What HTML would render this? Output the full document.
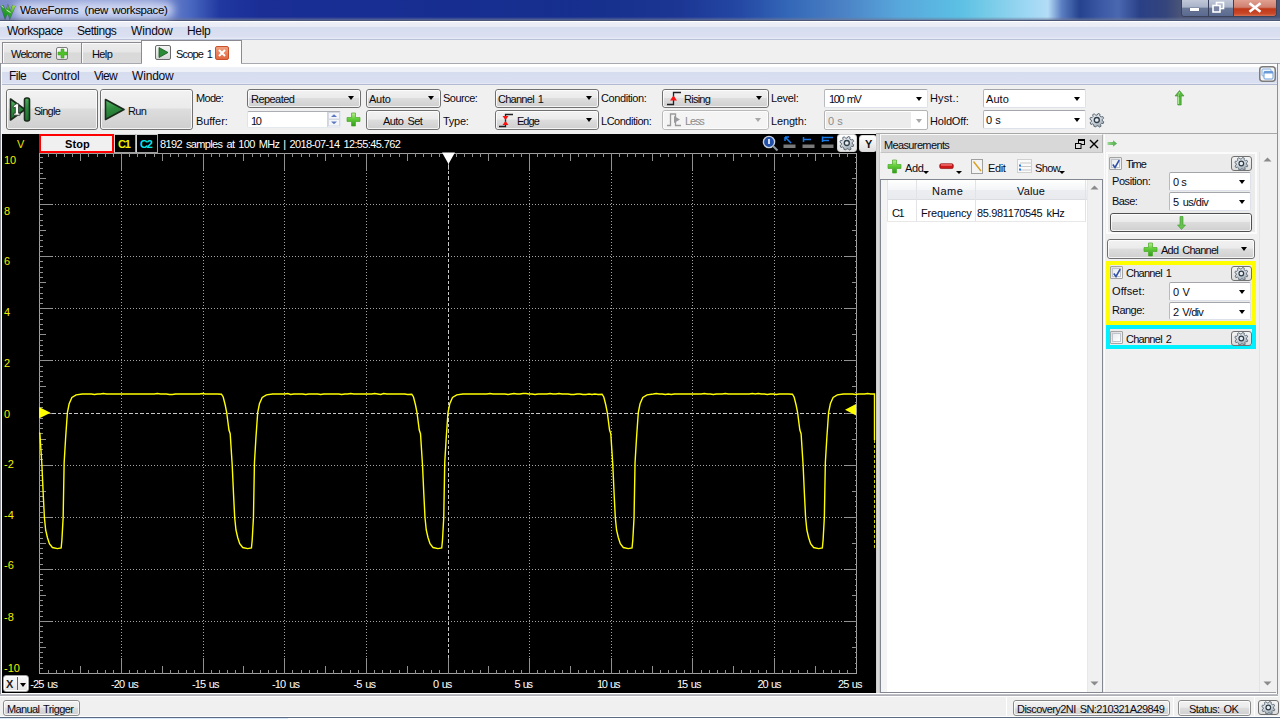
<!DOCTYPE html><html><head><meta charset="utf-8"><style>
*{margin:0;padding:0;box-sizing:border-box}
html,body{width:1280px;height:719px;overflow:hidden;background:#f0f0f0}
body{position:relative;font-family:"Liberation Sans",sans-serif;font-size:11px;color:#0a0a14}
.t{position:absolute;height:14px;line-height:14px;white-space:pre}
.btn{position:absolute;border:1px solid #707070;border-radius:3px;background:linear-gradient(#f2f2f2 0%,#ebebeb 45%,#dddddd 50%,#cfcfcf 100%)}
.btn:after{content:"";position:absolute;left:0;top:0;right:0;bottom:0;border:1px solid rgba(255,255,255,.75);border-radius:2px}
.edit{position:absolute;background:#fff;border:1px solid #abadb3;border-top-color:#abadb3;border-radius:2px}
.dis{position:absolute;background:#f4f4f4;border:1px solid #adb2b5;border-radius:2px}
.arr{position:absolute;width:0;height:0;border-left:3.5px solid transparent;border-right:3.5px solid transparent;border-top:4px solid #000}
svg{position:absolute;overflow:visible}
</style></head><body>
<div style="position:absolute;left:0px;top:0px;width:1280px;height:21px;background:linear-gradient(90deg,#7c8cc8 0px,#8c9cd4 90px,#8494d0 150px,#4a68c0 190px,#2038a0 220px,#1a2e96 260px,#172e90 450px,#16308e 600px,#1c3694 680px,#2448a4 740px,#3468b8 790px,#4a80c4 840px,#58a8dc 900px,#5cc0e4 960px,#78cce8 990px,#a0d8f4 1030px,#b4dcf6 1048px,#5a7cc0 1062px,#24428e 1080px,#3a58a4 1100px,#4a68b0 1118px,#2a4086 1140px,#34447c 1165px,#4a5478 1180px,#4a5478 1280px)"></div>
<div style="position:absolute;left:0px;top:17px;width:1280px;height:3px;background:linear-gradient(rgba(120,130,160,0) ,rgba(110,120,150,.75))"></div>
<div style="position:absolute;left:0px;top:20px;width:1280px;height:1px;background:#4c5678"></div>
<div style="position:absolute;left:14px;top:2px;width:160px;height:16px;background:rgba(235,240,255,.72);filter:blur(4px);border-radius:8px"></div>
<svg style="left:0px;top:4px" width="16" height="13" viewBox="0 0 16 13"><defs><linearGradient id="wg" x1="0" y1="1" x2="1" y2="0"><stop offset="0" stop-color="#0e8a2a"/><stop offset="0.55" stop-color="#3aae2a"/><stop offset="1" stop-color="#a8e040"/></linearGradient></defs><path d="M2,1.5 L5.2,11.3 L7.8,4.8 L9.9,11.3 L14,1.5" fill="none" stroke="#2a4a3a" stroke-width="3.6" stroke-linejoin="miter" opacity=".55"/><path d="M2,1.5 L5.2,11.3 L7.8,4.8 L9.9,11.3 L14,1.5" fill="none" stroke="url(#wg)" stroke-width="2.6" stroke-linejoin="miter"/><path d="M1.5,2 L3.5,3.5 M6.5,6 L10.5,8.5" stroke="#f0fff0" stroke-width="0.9" opacity=".9"/></svg>
<div class="t" style="left:20.00px;top:3px;font-size:11.5px;color:#000;letter-spacing:-0.344px;">WaveForms</div>
<div class="t" style="left:84.50px;top:3px;font-size:11.5px;color:#000;letter-spacing:-0.364px;word-spacing:1.5px;">(new workspace)</div>
<div style="position:absolute;left:1181px;top:0px;width:96px;height:17px;border:1px solid #3c4258;border-top:none;border-radius:0 0 4px 4px;overflow:hidden;background:#6a7696"><div style="position:absolute;left:0px;top:0px;width:26px;height:16px;background:linear-gradient(#c0c8d8,#a8b2c8 45%,#6a7898 50%,#5a6a90)"></div><div style="position:absolute;left:26px;top:0px;width:1px;height:16px;background:#39405a"></div><div style="position:absolute;left:27px;top:0px;width:24px;height:16px;background:linear-gradient(#c0c8d8,#a8b2c8 45%,#6a7898 50%,#5a6a90)"></div><div style="position:absolute;left:51px;top:0px;width:1px;height:16px;background:#39405a"></div><div style="position:absolute;left:52px;top:0px;width:44px;height:16px;background:linear-gradient(#e0a090,#d08070 45%,#c03818 55%,#c84828 85%,#d87050)"></div></div>
<div style="position:absolute;left:1190px;top:8px;width:9px;height:3px;background:#fff;box-shadow:0 0 1px #334"></div>
<svg style="left:1212px;top:2px" width="13" height="11"><rect x="4.5" y="0.5" width="7" height="6" fill="none" stroke="#fff" stroke-width="1.6"/><rect x="1" y="3.5" width="7" height="6.5" fill="#7a86a4" stroke="#fff" stroke-width="1.6"/></svg>
<svg style="left:1249px;top:3px" width="12" height="9"><path d="M1.5,1 L10.5,8 M10.5,1 L1.5,8" stroke="#fff" stroke-width="2.6" stroke-linecap="square"/></svg>
<div style="position:absolute;left:0px;top:21px;width:1280px;height:18px;background:linear-gradient(#ffffff 0px,#ffffff 1px,#eef0f8 1px,#e8ebf5 6px,#d6ddef 6px,#dae0f1 16px,#e6eaf6 17px)"></div>
<div style="position:absolute;left:0px;top:39px;width:1280px;height:1px;background:#b9c1d9"></div>
<div class="t" style="left:7.00px;top:24px;font-size:12px;letter-spacing:-0.500px;">Workspace</div>
<div class="t" style="left:77.00px;top:24px;font-size:12px;letter-spacing:-0.507px;">Settings</div>
<div class="t" style="left:131.00px;top:24px;font-size:12px;letter-spacing:-0.180px;">Window</div>
<div class="t" style="left:187.00px;top:24px;font-size:12px;letter-spacing:-0.300px;">Help</div>
<div style="position:absolute;left:2px;top:42px;width:80px;height:22px;background:linear-gradient(#f8f8f8 0px,#ececec 1px,#e6e6e6 9px,#d9d9d9 10px,#dadada 20px);border:1px solid #8a8a90;border-bottom:none;box-shadow:inset 1px 1px 0 #fafafa"></div>
<div style="position:absolute;left:81px;top:42px;width:61px;height:22px;background:linear-gradient(#f8f8f8 0px,#ececec 1px,#e6e6e6 9px,#d9d9d9 10px,#dadada 20px);border:1px solid #8a8a90;border-bottom:none;box-shadow:inset 1px 1px 0 #fafafa"></div>
<div style="position:absolute;left:141px;top:40px;width:101px;height:25px;background:#fff;border:1px solid #8a8a90;border-bottom:none"></div>
<div style="position:absolute;left:241px;top:63px;width:1039px;height:1px;background:#a8a8b0"></div>
<div style="position:absolute;left:0px;top:63px;width:142px;height:1px;background:#a8a8b0"></div>
<div class="t" style="left:11.00px;top:47px;font-size:11px;letter-spacing:-0.808px;">Welcome</div>
<div class="t" style="left:92.00px;top:47px;font-size:11px;letter-spacing:-0.600px;">Help</div>
<div class="t" style="left:176.00px;top:47px;font-size:11px;letter-spacing:-0.842px;word-spacing:1.5px;">Scope 1</div>
<div style="position:absolute;left:56px;top:47px;width:12px;height:13px;border:1px solid #7c7c7c;border-radius:2px;background:linear-gradient(#fdfdfd,#e0e0e0)"></div>
<svg style="left:57px;top:48px" width="11" height="11"><path d="M4,1 H7 V4 H10 V7 H7 V10 H4 V7 H1 V4 H4 Z" fill="#4ec02a" stroke="#3a9a20" stroke-width="0.5"/></svg>
<div style="position:absolute;left:155px;top:45px;width:16px;height:15px;border:1px solid #6a6a6a;border-radius:2px;background:linear-gradient(#f6f6f6,#d8d8d8)"></div>
<svg style="left:158px;top:47px" width="11" height="11"><path d="M1,0.5 L10,5.5 L1,10.5 Z" fill="#2a8a36" stroke="#165a20" stroke-width="0.8"/></svg>
<div style="position:absolute;left:215px;top:46px;width:14px;height:14px;border:1px solid #c8502a;border-radius:2px;background:linear-gradient(#f0a080,#e06840)"></div>
<svg style="left:218px;top:49px" width="8" height="8"><path d="M1,1 L7,7 M7,1 L1,7" stroke="#fff" stroke-width="2"/></svg>
<div style="position:absolute;left:0px;top:63px;width:1px;height:656px;background:#8e9098"></div>
<div style="position:absolute;left:1px;top:64px;width:1px;height:655px;background:#fcfcfc"></div>
<div style="position:absolute;left:1277px;top:63px;width:1px;height:656px;background:#8e9098"></div>
<div style="position:absolute;left:2px;top:64px;width:1275px;height:20px;background:linear-gradient(#ffffff 0px,#ffffff 3px,#eff1f8 3px,#eef0f8 8px,#d6ddef 8px,#dae0f1 19px,#e4e8f5 19px)"></div>
<div style="position:absolute;left:2px;top:84px;width:1275px;height:1px;background:#b3bbd2"></div>
<div class="t" style="left:9.00px;top:69px;font-size:12px;letter-spacing:-0.517px;">File</div>
<div class="t" style="left:42.00px;top:69px;font-size:12px;letter-spacing:-0.150px;">Control</div>
<div class="t" style="left:94.00px;top:69px;font-size:12px;letter-spacing:-0.683px;">View</div>
<div class="t" style="left:132.00px;top:69px;font-size:12px;letter-spacing:-0.180px;">Window</div>
<svg style="left:1259px;top:66px" width="17" height="16"><rect x="0.75" y="0.75" width="15.5" height="14.5" rx="3" fill="#f6f6f6" stroke="#7c7c7c" stroke-width="1.5"/><rect x="3" y="3" width="9" height="7" rx="1" fill="#eef4fc" stroke="#8ab0e0" stroke-width="1"/><rect x="5" y="5.5" width="9" height="7.5" rx="1" fill="#ffffff" stroke="#6a9ad8" stroke-width="1"/><rect x="5" y="5.5" width="9" height="2" fill="#6a9ad8"/></svg>
<div class="btn" style="left:6px;top:89px;width:92px;height:41px"></div>
<div class="btn" style="left:100px;top:89px;width:93px;height:41px"></div>
<svg style="left:9px;top:97px" width="22" height="25" viewBox="0 0 22 25"><defs><linearGradient id="gg" x1="0" y1="0" x2="0.3" y2="1"><stop offset="0" stop-color="#5cb86a"/><stop offset="0.5" stop-color="#2e8c3e"/><stop offset="1" stop-color="#1f7030"/></linearGradient></defs><path d="M1.5,2 L16,12.5 L1.5,23 Z" fill="url(#gg)" stroke="#1a2a1c" stroke-width="1.6" stroke-linejoin="round"/><rect x="15.5" y="1" width="5" height="23" rx="2" fill="url(#gg)" stroke="#1a2a1c" stroke-width="1.6"/><path d="M4.2,9 L7.2,6.8 H9.6 V16.2 H11 V18.2 H4.6 V16.2 H6.3 V10.2 L4.2,11.2 Z" fill="#ffffff" stroke="#303830" stroke-width="0.9" stroke-linejoin="round"/></svg>
<svg style="left:104px;top:98px" width="22" height="24" viewBox="0 0 22 24"><path d="M1.5,1.5 L20,11.5 L1.5,21.5 Z" fill="url(#gg)" stroke="#1a2a1c" stroke-width="1.6" stroke-linejoin="round"/></svg>
<div class="t" style="left:34.00px;top:104px;font-size:11px;letter-spacing:-0.760px;">Single</div>
<div class="t" style="left:128.00px;top:104px;font-size:11px;letter-spacing:-0.700px;">Run</div>
<div class="t" style="left:196.00px;top:91px;font-size:11px;letter-spacing:-0.688px;">Mode:</div>
<div class="t" style="left:196.00px;top:114px;font-size:11px;letter-spacing:-0.067px;">Buffer:</div>
<div class="btn" style="left:247px;top:89px;width:114px;height:19px"></div><div class="arr" style="left:348px;top:96px"></div><div class="t" style="left:251.00px;top:92px;font-size:11px;letter-spacing:-0.557px;">Repeated</div>
<div class="edit" style="left:247px;top:111px;width:94px;height:17px;border-color:#abadb3 #e3e9ef #e3e9ef #e2e3ea"></div>
<div class="t" style="left:251.00px;top:114px;font-size:11px;letter-spacing:-1.450px;">10</div>
<div style="position:absolute;left:327px;top:112px;width:13px;height:15px;border-left:1px solid #d0d4dc"></div>
<svg style="left:328px;top:112px" width="13" height="15"><rect x="0.5" y="0.5" width="11" height="6.5" fill="#f4f6fa" stroke="#d4d8e0"/><rect x="0.5" y="7.5" width="11" height="6.5" fill="#f4f6fa" stroke="#d4d8e0"/><path d="M3,5 L6,2.2 L9,5 Z" fill="#5a78c0"/><path d="M3,9.5 L6,12.3 L9,9.5 Z" fill="#5a78c0"/></svg>
<svg style="left:346px;top:112px" width="15" height="15"><defs><linearGradient id="pg" x1="0" y1="0" x2="0" y2="1"><stop offset="0" stop-color="#b8f090"/><stop offset="0.45" stop-color="#62cc38"/><stop offset="1" stop-color="#2e9a1a"/></linearGradient></defs><path d="M5.5,1 H9.5 V5.5 H14 V9.5 H9.5 V14 H5.5 V9.5 H1 V5.5 H5.5 Z" fill="url(#pg)" stroke="#4aa82a" stroke-width="0.7" stroke-linejoin="round"/></svg>
<div class="btn" style="left:366px;top:89px;width:75px;height:19px"></div><div class="arr" style="left:428px;top:96px"></div><div class="t" style="left:369.00px;top:92px;font-size:11px;letter-spacing:-0.283px;">Auto</div>
<div class="btn" style="left:366px;top:110px;width:74px;height:20px"></div>
<div class="t" style="left:383.00px;top:114px;font-size:11px;letter-spacing:-0.557px;word-spacing:1.5px;">Auto Set</div>
<div class="t" style="left:443.00px;top:91px;font-size:11px;letter-spacing:-0.517px;">Source:</div>
<div class="t" style="left:443.00px;top:114px;font-size:11px;letter-spacing:-0.275px;">Type:</div>
<div class="btn" style="left:495px;top:89px;width:104px;height:19px"></div><div class="arr" style="left:586px;top:96px"></div><div class="t" style="left:498.00px;top:92px;font-size:11px;letter-spacing:-0.731px;word-spacing:1.5px;">Channel 1</div>
<div class="btn" style="left:495px;top:110px;width:104px;height:20px"></div><div class="arr" style="left:586px;top:118px"></div><svg style="left:499px;top:113px" width="16" height="15"><path d="M0,13.5 H6.5 V1.5 H14" fill="none" stroke="#202020" stroke-width="1.3"/><path d="M3.5,3 L9.5,3 L6.5,7 Z M3.5,12 L9.5,12 L6.5,8 Z" fill="#ff1010"/></svg><div class="t" style="left:517.00px;top:114px;font-size:11px;letter-spacing:-0.967px;">Edge</div>
<div class="t" style="left:601.00px;top:91px;font-size:11px;letter-spacing:-0.417px;">Condition:</div>
<div class="t" style="left:601.00px;top:114px;font-size:11px;letter-spacing:-0.485px;">LCondition:</div>
<div class="btn" style="left:662px;top:89px;width:107px;height:19px"></div><div class="arr" style="left:756px;top:96px"></div><svg style="left:667px;top:91px" width="16" height="15"><path d="M0,13.5 H6.5 V1.5 H14" fill="none" stroke="#202020" stroke-width="1.3"/><path d="M3,9.5 L10,9.5 L6.5,4.5 Z" fill="#ff1010"/></svg><div class="t" style="left:684.00px;top:92px;font-size:11px;letter-spacing:-0.750px;">Rising</div>
<div class="btn" style="left:662px;top:110px;width:107px;height:20px;border-color:#b8b8b8;background:#f4f4f4"></div>
<div class="arr" style="left:755px;top:118px;border-top-color:#a8a8a8"></div>
<svg style="left:667px;top:112px" width="16" height="15"><path d="M0,13.5 H3.5 V2 H8.5 V13.5 H14" fill="none" stroke="#9a9a9a" stroke-width="1.3"/><path d="M7,4 L13,7.5 L7,11 Z" fill="#9a9a9a"/></svg>
<div class="t" style="left:685.00px;top:114px;font-size:11px;color:#8c8c8c;letter-spacing:-1.150px;">Less</div>
<div class="t" style="left:771.00px;top:91px;font-size:11px;letter-spacing:-0.310px;">Level:</div>
<div class="t" style="left:771.00px;top:114px;font-size:11px;letter-spacing:-0.150px;">Length:</div>
<div class="edit" style="left:824px;top:89px;width:104px;height:19px;border-color:#a4a6ac #dde2ea #dde2ea #b8bac0"></div><div class="arr" style="left:916px;top:97px"></div><div class="t" style="left:829.00px;top:92px;font-size:11px;letter-spacing:-1.320px;word-spacing:1.5px;">100 mV</div>
<div class="edit" style="left:824px;top:110px;width:104px;height:20px;border-color:#b4b4b4"></div><div style="position:absolute;left:826px;top:112px;width:85px;height:16px;background:#ececec"></div><div class="arr" style="left:916px;top:119px;border-top-color:#a8a8a8"></div><div class="t" style="left:828.00px;top:114px;font-size:11px;color:#8c8c8c;letter-spacing:0.075px;">0 s</div>
<div class="t" style="left:930.00px;top:91px;font-size:11px;letter-spacing:0.140px;">Hyst.:</div>
<div class="t" style="left:930.00px;top:114px;font-size:11px;letter-spacing:-0.193px;">HoldOff:</div>
<div class="edit" style="left:983px;top:89px;width:103px;height:19px;border-color:#a4a6ac #dde2ea #dde2ea #b8bac0"></div><div class="arr" style="left:1074px;top:97px"></div><div class="t" style="left:986.00px;top:92px;font-size:11px;letter-spacing:0.050px;">Auto</div>
<div class="edit" style="left:983px;top:110px;width:103px;height:19px;border-color:#a4a6ac #dde2ea #dde2ea #b8bac0"></div><div class="arr" style="left:1074px;top:118px"></div><div class="t" style="left:986.00px;top:113px;font-size:11px;letter-spacing:0.075px;">0 s</div>
<svg style="left:1090px;top:113px" width="14" height="14" viewBox="0 0 14 14"><defs><linearGradient id="gr" x1="0" y1="0" x2="1" y2="1"><stop offset="0" stop-color="#f4f6f8"/><stop offset="0.5" stop-color="#d0d6dc"/><stop offset="1" stop-color="#8a96a2"/></linearGradient></defs><g transform="rotate(18 7 7)"><path d="M6,0.5 H8 L8.4,2.3 L9.9,2.9 L11.4,1.9 L12.8,3.3 L11.8,4.8 L12.4,6.3 L14,6.6 V8.4 L12.4,8.8 L11.8,10.2 L12.8,11.7 L11.4,13.1 L9.9,12.1 L8.4,12.7 L8,14 H6 L5.6,12.7 L4.1,12.1 L2.6,13.1 L1.2,11.7 L2.2,10.2 L1.6,8.8 L0,8.4 V6.6 L1.6,6.3 L2.2,4.8 L1.2,3.3 L2.6,1.9 L4.1,2.9 L5.6,2.3 Z" fill="url(#gr)" stroke="#5e6c78" stroke-width="0.9"/></g><circle cx="6.8" cy="7" r="2.5" fill="#e8ecf0" stroke="#2e3c48" stroke-width="1.3"/></svg>
<svg style="left:1174px;top:90px" width="11" height="16"><path d="M5.5,0.5 L10,6 H7.2 V15 H3.8 V6 H1 Z" fill="#58b840" stroke="#3a8a28" stroke-width="0.6"/><path d="M5.5,2 L4.5,6.5 V14" stroke="#a8e890" stroke-width="1"/></svg>
<div style="position:absolute;left:2px;top:134px;width:874px;height:559px;background:#000"></div>
<svg class="plot" width="876" height="559" viewBox="0 134 876 559" style="position:absolute;left:0;top:134px"><g shape-rendering="crispEdges"><line x1="121.5" y1="170" x2="121.5" y2="658" stroke="#a4a4a4" stroke-width="1" stroke-dasharray="1 2"/>
<line x1="203.5" y1="170" x2="203.5" y2="658" stroke="#a4a4a4" stroke-width="1" stroke-dasharray="1 2"/>
<line x1="284.5" y1="170" x2="284.5" y2="658" stroke="#a4a4a4" stroke-width="1" stroke-dasharray="1 2"/>
<line x1="366.5" y1="170" x2="366.5" y2="658" stroke="#a4a4a4" stroke-width="1" stroke-dasharray="1 2"/>
<line x1="529.5" y1="170" x2="529.5" y2="658" stroke="#a4a4a4" stroke-width="1" stroke-dasharray="1 2"/>
<line x1="611.5" y1="170" x2="611.5" y2="658" stroke="#a4a4a4" stroke-width="1" stroke-dasharray="1 2"/>
<line x1="692.5" y1="170" x2="692.5" y2="658" stroke="#a4a4a4" stroke-width="1" stroke-dasharray="1 2"/>
<line x1="774.5" y1="170" x2="774.5" y2="658" stroke="#a4a4a4" stroke-width="1" stroke-dasharray="1 2"/>
<line x1="52" y1="204.5" x2="845" y2="204.5" stroke="#a4a4a4" stroke-width="1" stroke-dasharray="1 2"/>
<line x1="52" y1="256.5" x2="845" y2="256.5" stroke="#a4a4a4" stroke-width="1" stroke-dasharray="1 2"/>
<line x1="52" y1="308.5" x2="845" y2="308.5" stroke="#a4a4a4" stroke-width="1" stroke-dasharray="1 2"/>
<line x1="52" y1="360.5" x2="845" y2="360.5" stroke="#a4a4a4" stroke-width="1" stroke-dasharray="1 2"/>
<line x1="52" y1="465.5" x2="845" y2="465.5" stroke="#a4a4a4" stroke-width="1" stroke-dasharray="1 2"/>
<line x1="52" y1="517.5" x2="845" y2="517.5" stroke="#a4a4a4" stroke-width="1" stroke-dasharray="1 2"/>
<line x1="52" y1="569.5" x2="845" y2="569.5" stroke="#a4a4a4" stroke-width="1" stroke-dasharray="1 2"/>
<line x1="52" y1="621.5" x2="845" y2="621.5" stroke="#a4a4a4" stroke-width="1" stroke-dasharray="1 2"/>
<rect x="39.5" y="153.5" width="817" height="520" fill="none" stroke="#a0a0a0" stroke-width="1"/>
<line x1="48.5" y1="153" x2="48.5" y2="157" stroke="#909090"/>
<line x1="48.5" y1="674" x2="48.5" y2="670" stroke="#909090"/>
<line x1="56.5" y1="153" x2="56.5" y2="157" stroke="#909090"/>
<line x1="56.5" y1="674" x2="56.5" y2="670" stroke="#909090"/>
<line x1="64.5" y1="153" x2="64.5" y2="157" stroke="#909090"/>
<line x1="64.5" y1="674" x2="64.5" y2="670" stroke="#909090"/>
<line x1="72.5" y1="153" x2="72.5" y2="157" stroke="#909090"/>
<line x1="72.5" y1="674" x2="72.5" y2="670" stroke="#909090"/>
<line x1="80.5" y1="153" x2="80.5" y2="161" stroke="#909090"/>
<line x1="80.5" y1="674" x2="80.5" y2="666" stroke="#909090"/>
<line x1="88.5" y1="153" x2="88.5" y2="157" stroke="#909090"/>
<line x1="88.5" y1="674" x2="88.5" y2="670" stroke="#909090"/>
<line x1="97.5" y1="153" x2="97.5" y2="157" stroke="#909090"/>
<line x1="97.5" y1="674" x2="97.5" y2="670" stroke="#909090"/>
<line x1="105.5" y1="153" x2="105.5" y2="157" stroke="#909090"/>
<line x1="105.5" y1="674" x2="105.5" y2="670" stroke="#909090"/>
<line x1="113.5" y1="153" x2="113.5" y2="157" stroke="#909090"/>
<line x1="113.5" y1="674" x2="113.5" y2="670" stroke="#909090"/>
<line x1="121.5" y1="153" x2="121.5" y2="170" stroke="#909090"/>
<line x1="121.5" y1="674" x2="121.5" y2="658" stroke="#909090"/>
<line x1="129.5" y1="153" x2="129.5" y2="157" stroke="#909090"/>
<line x1="129.5" y1="674" x2="129.5" y2="670" stroke="#909090"/>
<line x1="137.5" y1="153" x2="137.5" y2="157" stroke="#909090"/>
<line x1="137.5" y1="674" x2="137.5" y2="670" stroke="#909090"/>
<line x1="145.5" y1="153" x2="145.5" y2="157" stroke="#909090"/>
<line x1="145.5" y1="674" x2="145.5" y2="670" stroke="#909090"/>
<line x1="154.5" y1="153" x2="154.5" y2="157" stroke="#909090"/>
<line x1="154.5" y1="674" x2="154.5" y2="670" stroke="#909090"/>
<line x1="162.5" y1="153" x2="162.5" y2="161" stroke="#909090"/>
<line x1="162.5" y1="674" x2="162.5" y2="666" stroke="#909090"/>
<line x1="170.5" y1="153" x2="170.5" y2="157" stroke="#909090"/>
<line x1="170.5" y1="674" x2="170.5" y2="670" stroke="#909090"/>
<line x1="178.5" y1="153" x2="178.5" y2="157" stroke="#909090"/>
<line x1="178.5" y1="674" x2="178.5" y2="670" stroke="#909090"/>
<line x1="186.5" y1="153" x2="186.5" y2="157" stroke="#909090"/>
<line x1="186.5" y1="674" x2="186.5" y2="670" stroke="#909090"/>
<line x1="194.5" y1="153" x2="194.5" y2="157" stroke="#909090"/>
<line x1="194.5" y1="674" x2="194.5" y2="670" stroke="#909090"/>
<line x1="203.5" y1="153" x2="203.5" y2="170" stroke="#909090"/>
<line x1="203.5" y1="674" x2="203.5" y2="658" stroke="#909090"/>
<line x1="211.5" y1="153" x2="211.5" y2="157" stroke="#909090"/>
<line x1="211.5" y1="674" x2="211.5" y2="670" stroke="#909090"/>
<line x1="219.5" y1="153" x2="219.5" y2="157" stroke="#909090"/>
<line x1="219.5" y1="674" x2="219.5" y2="670" stroke="#909090"/>
<line x1="227.5" y1="153" x2="227.5" y2="157" stroke="#909090"/>
<line x1="227.5" y1="674" x2="227.5" y2="670" stroke="#909090"/>
<line x1="235.5" y1="153" x2="235.5" y2="157" stroke="#909090"/>
<line x1="235.5" y1="674" x2="235.5" y2="670" stroke="#909090"/>
<line x1="243.5" y1="153" x2="243.5" y2="161" stroke="#909090"/>
<line x1="243.5" y1="674" x2="243.5" y2="666" stroke="#909090"/>
<line x1="252.5" y1="153" x2="252.5" y2="157" stroke="#909090"/>
<line x1="252.5" y1="674" x2="252.5" y2="670" stroke="#909090"/>
<line x1="260.5" y1="153" x2="260.5" y2="157" stroke="#909090"/>
<line x1="260.5" y1="674" x2="260.5" y2="670" stroke="#909090"/>
<line x1="268.5" y1="153" x2="268.5" y2="157" stroke="#909090"/>
<line x1="268.5" y1="674" x2="268.5" y2="670" stroke="#909090"/>
<line x1="276.5" y1="153" x2="276.5" y2="157" stroke="#909090"/>
<line x1="276.5" y1="674" x2="276.5" y2="670" stroke="#909090"/>
<line x1="284.5" y1="153" x2="284.5" y2="170" stroke="#909090"/>
<line x1="284.5" y1="674" x2="284.5" y2="658" stroke="#909090"/>
<line x1="292.5" y1="153" x2="292.5" y2="157" stroke="#909090"/>
<line x1="292.5" y1="674" x2="292.5" y2="670" stroke="#909090"/>
<line x1="301.5" y1="153" x2="301.5" y2="157" stroke="#909090"/>
<line x1="301.5" y1="674" x2="301.5" y2="670" stroke="#909090"/>
<line x1="309.5" y1="153" x2="309.5" y2="157" stroke="#909090"/>
<line x1="309.5" y1="674" x2="309.5" y2="670" stroke="#909090"/>
<line x1="317.5" y1="153" x2="317.5" y2="157" stroke="#909090"/>
<line x1="317.5" y1="674" x2="317.5" y2="670" stroke="#909090"/>
<line x1="325.5" y1="153" x2="325.5" y2="161" stroke="#909090"/>
<line x1="325.5" y1="674" x2="325.5" y2="666" stroke="#909090"/>
<line x1="333.5" y1="153" x2="333.5" y2="157" stroke="#909090"/>
<line x1="333.5" y1="674" x2="333.5" y2="670" stroke="#909090"/>
<line x1="341.5" y1="153" x2="341.5" y2="157" stroke="#909090"/>
<line x1="341.5" y1="674" x2="341.5" y2="670" stroke="#909090"/>
<line x1="350.5" y1="153" x2="350.5" y2="157" stroke="#909090"/>
<line x1="350.5" y1="674" x2="350.5" y2="670" stroke="#909090"/>
<line x1="358.5" y1="153" x2="358.5" y2="157" stroke="#909090"/>
<line x1="358.5" y1="674" x2="358.5" y2="670" stroke="#909090"/>
<line x1="366.5" y1="153" x2="366.5" y2="170" stroke="#909090"/>
<line x1="366.5" y1="674" x2="366.5" y2="658" stroke="#909090"/>
<line x1="374.5" y1="153" x2="374.5" y2="157" stroke="#909090"/>
<line x1="374.5" y1="674" x2="374.5" y2="670" stroke="#909090"/>
<line x1="382.5" y1="153" x2="382.5" y2="157" stroke="#909090"/>
<line x1="382.5" y1="674" x2="382.5" y2="670" stroke="#909090"/>
<line x1="390.5" y1="153" x2="390.5" y2="157" stroke="#909090"/>
<line x1="390.5" y1="674" x2="390.5" y2="670" stroke="#909090"/>
<line x1="399.5" y1="153" x2="399.5" y2="157" stroke="#909090"/>
<line x1="399.5" y1="674" x2="399.5" y2="670" stroke="#909090"/>
<line x1="407.5" y1="153" x2="407.5" y2="161" stroke="#909090"/>
<line x1="407.5" y1="674" x2="407.5" y2="666" stroke="#909090"/>
<line x1="415.5" y1="153" x2="415.5" y2="157" stroke="#909090"/>
<line x1="415.5" y1="674" x2="415.5" y2="670" stroke="#909090"/>
<line x1="423.5" y1="153" x2="423.5" y2="157" stroke="#909090"/>
<line x1="423.5" y1="674" x2="423.5" y2="670" stroke="#909090"/>
<line x1="431.5" y1="153" x2="431.5" y2="157" stroke="#909090"/>
<line x1="431.5" y1="674" x2="431.5" y2="670" stroke="#909090"/>
<line x1="439.5" y1="153" x2="439.5" y2="157" stroke="#909090"/>
<line x1="439.5" y1="674" x2="439.5" y2="670" stroke="#909090"/>
<line x1="448.5" y1="153" x2="448.5" y2="170" stroke="#909090"/>
<line x1="448.5" y1="674" x2="448.5" y2="658" stroke="#909090"/>
<line x1="456.5" y1="153" x2="456.5" y2="157" stroke="#909090"/>
<line x1="456.5" y1="674" x2="456.5" y2="670" stroke="#909090"/>
<line x1="464.5" y1="153" x2="464.5" y2="157" stroke="#909090"/>
<line x1="464.5" y1="674" x2="464.5" y2="670" stroke="#909090"/>
<line x1="472.5" y1="153" x2="472.5" y2="157" stroke="#909090"/>
<line x1="472.5" y1="674" x2="472.5" y2="670" stroke="#909090"/>
<line x1="480.5" y1="153" x2="480.5" y2="157" stroke="#909090"/>
<line x1="480.5" y1="674" x2="480.5" y2="670" stroke="#909090"/>
<line x1="488.5" y1="153" x2="488.5" y2="161" stroke="#909090"/>
<line x1="488.5" y1="674" x2="488.5" y2="666" stroke="#909090"/>
<line x1="496.5" y1="153" x2="496.5" y2="157" stroke="#909090"/>
<line x1="496.5" y1="674" x2="496.5" y2="670" stroke="#909090"/>
<line x1="505.5" y1="153" x2="505.5" y2="157" stroke="#909090"/>
<line x1="505.5" y1="674" x2="505.5" y2="670" stroke="#909090"/>
<line x1="513.5" y1="153" x2="513.5" y2="157" stroke="#909090"/>
<line x1="513.5" y1="674" x2="513.5" y2="670" stroke="#909090"/>
<line x1="521.5" y1="153" x2="521.5" y2="157" stroke="#909090"/>
<line x1="521.5" y1="674" x2="521.5" y2="670" stroke="#909090"/>
<line x1="529.5" y1="153" x2="529.5" y2="170" stroke="#909090"/>
<line x1="529.5" y1="674" x2="529.5" y2="658" stroke="#909090"/>
<line x1="537.5" y1="153" x2="537.5" y2="157" stroke="#909090"/>
<line x1="537.5" y1="674" x2="537.5" y2="670" stroke="#909090"/>
<line x1="545.5" y1="153" x2="545.5" y2="157" stroke="#909090"/>
<line x1="545.5" y1="674" x2="545.5" y2="670" stroke="#909090"/>
<line x1="554.5" y1="153" x2="554.5" y2="157" stroke="#909090"/>
<line x1="554.5" y1="674" x2="554.5" y2="670" stroke="#909090"/>
<line x1="562.5" y1="153" x2="562.5" y2="157" stroke="#909090"/>
<line x1="562.5" y1="674" x2="562.5" y2="670" stroke="#909090"/>
<line x1="570.5" y1="153" x2="570.5" y2="161" stroke="#909090"/>
<line x1="570.5" y1="674" x2="570.5" y2="666" stroke="#909090"/>
<line x1="578.5" y1="153" x2="578.5" y2="157" stroke="#909090"/>
<line x1="578.5" y1="674" x2="578.5" y2="670" stroke="#909090"/>
<line x1="586.5" y1="153" x2="586.5" y2="157" stroke="#909090"/>
<line x1="586.5" y1="674" x2="586.5" y2="670" stroke="#909090"/>
<line x1="594.5" y1="153" x2="594.5" y2="157" stroke="#909090"/>
<line x1="594.5" y1="674" x2="594.5" y2="670" stroke="#909090"/>
<line x1="603.5" y1="153" x2="603.5" y2="157" stroke="#909090"/>
<line x1="603.5" y1="674" x2="603.5" y2="670" stroke="#909090"/>
<line x1="611.5" y1="153" x2="611.5" y2="170" stroke="#909090"/>
<line x1="611.5" y1="674" x2="611.5" y2="658" stroke="#909090"/>
<line x1="619.5" y1="153" x2="619.5" y2="157" stroke="#909090"/>
<line x1="619.5" y1="674" x2="619.5" y2="670" stroke="#909090"/>
<line x1="627.5" y1="153" x2="627.5" y2="157" stroke="#909090"/>
<line x1="627.5" y1="674" x2="627.5" y2="670" stroke="#909090"/>
<line x1="635.5" y1="153" x2="635.5" y2="157" stroke="#909090"/>
<line x1="635.5" y1="674" x2="635.5" y2="670" stroke="#909090"/>
<line x1="643.5" y1="153" x2="643.5" y2="157" stroke="#909090"/>
<line x1="643.5" y1="674" x2="643.5" y2="670" stroke="#909090"/>
<line x1="652.5" y1="153" x2="652.5" y2="161" stroke="#909090"/>
<line x1="652.5" y1="674" x2="652.5" y2="666" stroke="#909090"/>
<line x1="660.5" y1="153" x2="660.5" y2="157" stroke="#909090"/>
<line x1="660.5" y1="674" x2="660.5" y2="670" stroke="#909090"/>
<line x1="668.5" y1="153" x2="668.5" y2="157" stroke="#909090"/>
<line x1="668.5" y1="674" x2="668.5" y2="670" stroke="#909090"/>
<line x1="676.5" y1="153" x2="676.5" y2="157" stroke="#909090"/>
<line x1="676.5" y1="674" x2="676.5" y2="670" stroke="#909090"/>
<line x1="684.5" y1="153" x2="684.5" y2="157" stroke="#909090"/>
<line x1="684.5" y1="674" x2="684.5" y2="670" stroke="#909090"/>
<line x1="692.5" y1="153" x2="692.5" y2="170" stroke="#909090"/>
<line x1="692.5" y1="674" x2="692.5" y2="658" stroke="#909090"/>
<line x1="701.5" y1="153" x2="701.5" y2="157" stroke="#909090"/>
<line x1="701.5" y1="674" x2="701.5" y2="670" stroke="#909090"/>
<line x1="709.5" y1="153" x2="709.5" y2="157" stroke="#909090"/>
<line x1="709.5" y1="674" x2="709.5" y2="670" stroke="#909090"/>
<line x1="717.5" y1="153" x2="717.5" y2="157" stroke="#909090"/>
<line x1="717.5" y1="674" x2="717.5" y2="670" stroke="#909090"/>
<line x1="725.5" y1="153" x2="725.5" y2="157" stroke="#909090"/>
<line x1="725.5" y1="674" x2="725.5" y2="670" stroke="#909090"/>
<line x1="733.5" y1="153" x2="733.5" y2="161" stroke="#909090"/>
<line x1="733.5" y1="674" x2="733.5" y2="666" stroke="#909090"/>
<line x1="741.5" y1="153" x2="741.5" y2="157" stroke="#909090"/>
<line x1="741.5" y1="674" x2="741.5" y2="670" stroke="#909090"/>
<line x1="750.5" y1="153" x2="750.5" y2="157" stroke="#909090"/>
<line x1="750.5" y1="674" x2="750.5" y2="670" stroke="#909090"/>
<line x1="758.5" y1="153" x2="758.5" y2="157" stroke="#909090"/>
<line x1="758.5" y1="674" x2="758.5" y2="670" stroke="#909090"/>
<line x1="766.5" y1="153" x2="766.5" y2="157" stroke="#909090"/>
<line x1="766.5" y1="674" x2="766.5" y2="670" stroke="#909090"/>
<line x1="774.5" y1="153" x2="774.5" y2="170" stroke="#909090"/>
<line x1="774.5" y1="674" x2="774.5" y2="658" stroke="#909090"/>
<line x1="782.5" y1="153" x2="782.5" y2="157" stroke="#909090"/>
<line x1="782.5" y1="674" x2="782.5" y2="670" stroke="#909090"/>
<line x1="790.5" y1="153" x2="790.5" y2="157" stroke="#909090"/>
<line x1="790.5" y1="674" x2="790.5" y2="670" stroke="#909090"/>
<line x1="798.5" y1="153" x2="798.5" y2="157" stroke="#909090"/>
<line x1="798.5" y1="674" x2="798.5" y2="670" stroke="#909090"/>
<line x1="807.5" y1="153" x2="807.5" y2="157" stroke="#909090"/>
<line x1="807.5" y1="674" x2="807.5" y2="670" stroke="#909090"/>
<line x1="815.5" y1="153" x2="815.5" y2="161" stroke="#909090"/>
<line x1="815.5" y1="674" x2="815.5" y2="666" stroke="#909090"/>
<line x1="823.5" y1="153" x2="823.5" y2="157" stroke="#909090"/>
<line x1="823.5" y1="674" x2="823.5" y2="670" stroke="#909090"/>
<line x1="831.5" y1="153" x2="831.5" y2="157" stroke="#909090"/>
<line x1="831.5" y1="674" x2="831.5" y2="670" stroke="#909090"/>
<line x1="839.5" y1="153" x2="839.5" y2="157" stroke="#909090"/>
<line x1="839.5" y1="674" x2="839.5" y2="670" stroke="#909090"/>
<line x1="847.5" y1="153" x2="847.5" y2="157" stroke="#909090"/>
<line x1="847.5" y1="674" x2="847.5" y2="670" stroke="#909090"/>
<line x1="39" y1="157.5" x2="43" y2="157.5" stroke="#909090"/>
<line x1="857" y1="157.5" x2="855" y2="157.5" stroke="#909090"/>
<line x1="39" y1="162.5" x2="43" y2="162.5" stroke="#909090"/>
<line x1="857" y1="162.5" x2="855" y2="162.5" stroke="#909090"/>
<line x1="39" y1="168.5" x2="43" y2="168.5" stroke="#909090"/>
<line x1="857" y1="168.5" x2="855" y2="168.5" stroke="#909090"/>
<line x1="39" y1="173.5" x2="43" y2="173.5" stroke="#909090"/>
<line x1="857" y1="173.5" x2="855" y2="173.5" stroke="#909090"/>
<line x1="39" y1="178.5" x2="46" y2="178.5" stroke="#909090"/>
<line x1="857" y1="178.5" x2="852" y2="178.5" stroke="#909090"/>
<line x1="39" y1="183.5" x2="43" y2="183.5" stroke="#909090"/>
<line x1="857" y1="183.5" x2="855" y2="183.5" stroke="#909090"/>
<line x1="39" y1="188.5" x2="43" y2="188.5" stroke="#909090"/>
<line x1="857" y1="188.5" x2="855" y2="188.5" stroke="#909090"/>
<line x1="39" y1="194.5" x2="43" y2="194.5" stroke="#909090"/>
<line x1="857" y1="194.5" x2="855" y2="194.5" stroke="#909090"/>
<line x1="39" y1="199.5" x2="43" y2="199.5" stroke="#909090"/>
<line x1="857" y1="199.5" x2="855" y2="199.5" stroke="#909090"/>
<line x1="39" y1="204.5" x2="52" y2="204.5" stroke="#909090"/>
<line x1="857" y1="204.5" x2="845" y2="204.5" stroke="#909090"/>
<line x1="39" y1="209.5" x2="43" y2="209.5" stroke="#909090"/>
<line x1="857" y1="209.5" x2="855" y2="209.5" stroke="#909090"/>
<line x1="39" y1="214.5" x2="43" y2="214.5" stroke="#909090"/>
<line x1="857" y1="214.5" x2="855" y2="214.5" stroke="#909090"/>
<line x1="39" y1="220.5" x2="43" y2="220.5" stroke="#909090"/>
<line x1="857" y1="220.5" x2="855" y2="220.5" stroke="#909090"/>
<line x1="39" y1="225.5" x2="43" y2="225.5" stroke="#909090"/>
<line x1="857" y1="225.5" x2="855" y2="225.5" stroke="#909090"/>
<line x1="39" y1="230.5" x2="46" y2="230.5" stroke="#909090"/>
<line x1="857" y1="230.5" x2="852" y2="230.5" stroke="#909090"/>
<line x1="39" y1="235.5" x2="43" y2="235.5" stroke="#909090"/>
<line x1="857" y1="235.5" x2="855" y2="235.5" stroke="#909090"/>
<line x1="39" y1="240.5" x2="43" y2="240.5" stroke="#909090"/>
<line x1="857" y1="240.5" x2="855" y2="240.5" stroke="#909090"/>
<line x1="39" y1="246.5" x2="43" y2="246.5" stroke="#909090"/>
<line x1="857" y1="246.5" x2="855" y2="246.5" stroke="#909090"/>
<line x1="39" y1="251.5" x2="43" y2="251.5" stroke="#909090"/>
<line x1="857" y1="251.5" x2="855" y2="251.5" stroke="#909090"/>
<line x1="39" y1="256.5" x2="52" y2="256.5" stroke="#909090"/>
<line x1="857" y1="256.5" x2="845" y2="256.5" stroke="#909090"/>
<line x1="39" y1="261.5" x2="43" y2="261.5" stroke="#909090"/>
<line x1="857" y1="261.5" x2="855" y2="261.5" stroke="#909090"/>
<line x1="39" y1="267.5" x2="43" y2="267.5" stroke="#909090"/>
<line x1="857" y1="267.5" x2="855" y2="267.5" stroke="#909090"/>
<line x1="39" y1="272.5" x2="43" y2="272.5" stroke="#909090"/>
<line x1="857" y1="272.5" x2="855" y2="272.5" stroke="#909090"/>
<line x1="39" y1="277.5" x2="43" y2="277.5" stroke="#909090"/>
<line x1="857" y1="277.5" x2="855" y2="277.5" stroke="#909090"/>
<line x1="39" y1="282.5" x2="46" y2="282.5" stroke="#909090"/>
<line x1="857" y1="282.5" x2="852" y2="282.5" stroke="#909090"/>
<line x1="39" y1="287.5" x2="43" y2="287.5" stroke="#909090"/>
<line x1="857" y1="287.5" x2="855" y2="287.5" stroke="#909090"/>
<line x1="39" y1="293.5" x2="43" y2="293.5" stroke="#909090"/>
<line x1="857" y1="293.5" x2="855" y2="293.5" stroke="#909090"/>
<line x1="39" y1="298.5" x2="43" y2="298.5" stroke="#909090"/>
<line x1="857" y1="298.5" x2="855" y2="298.5" stroke="#909090"/>
<line x1="39" y1="303.5" x2="43" y2="303.5" stroke="#909090"/>
<line x1="857" y1="303.5" x2="855" y2="303.5" stroke="#909090"/>
<line x1="39" y1="308.5" x2="52" y2="308.5" stroke="#909090"/>
<line x1="857" y1="308.5" x2="845" y2="308.5" stroke="#909090"/>
<line x1="39" y1="313.5" x2="43" y2="313.5" stroke="#909090"/>
<line x1="857" y1="313.5" x2="855" y2="313.5" stroke="#909090"/>
<line x1="39" y1="319.5" x2="43" y2="319.5" stroke="#909090"/>
<line x1="857" y1="319.5" x2="855" y2="319.5" stroke="#909090"/>
<line x1="39" y1="324.5" x2="43" y2="324.5" stroke="#909090"/>
<line x1="857" y1="324.5" x2="855" y2="324.5" stroke="#909090"/>
<line x1="39" y1="329.5" x2="43" y2="329.5" stroke="#909090"/>
<line x1="857" y1="329.5" x2="855" y2="329.5" stroke="#909090"/>
<line x1="39" y1="334.5" x2="46" y2="334.5" stroke="#909090"/>
<line x1="857" y1="334.5" x2="852" y2="334.5" stroke="#909090"/>
<line x1="39" y1="340.5" x2="43" y2="340.5" stroke="#909090"/>
<line x1="857" y1="340.5" x2="855" y2="340.5" stroke="#909090"/>
<line x1="39" y1="345.5" x2="43" y2="345.5" stroke="#909090"/>
<line x1="857" y1="345.5" x2="855" y2="345.5" stroke="#909090"/>
<line x1="39" y1="350.5" x2="43" y2="350.5" stroke="#909090"/>
<line x1="857" y1="350.5" x2="855" y2="350.5" stroke="#909090"/>
<line x1="39" y1="355.5" x2="43" y2="355.5" stroke="#909090"/>
<line x1="857" y1="355.5" x2="855" y2="355.5" stroke="#909090"/>
<line x1="39" y1="360.5" x2="52" y2="360.5" stroke="#909090"/>
<line x1="857" y1="360.5" x2="845" y2="360.5" stroke="#909090"/>
<line x1="39" y1="366.5" x2="43" y2="366.5" stroke="#909090"/>
<line x1="857" y1="366.5" x2="855" y2="366.5" stroke="#909090"/>
<line x1="39" y1="371.5" x2="43" y2="371.5" stroke="#909090"/>
<line x1="857" y1="371.5" x2="855" y2="371.5" stroke="#909090"/>
<line x1="39" y1="376.5" x2="43" y2="376.5" stroke="#909090"/>
<line x1="857" y1="376.5" x2="855" y2="376.5" stroke="#909090"/>
<line x1="39" y1="381.5" x2="43" y2="381.5" stroke="#909090"/>
<line x1="857" y1="381.5" x2="855" y2="381.5" stroke="#909090"/>
<line x1="39" y1="386.5" x2="46" y2="386.5" stroke="#909090"/>
<line x1="857" y1="386.5" x2="852" y2="386.5" stroke="#909090"/>
<line x1="39" y1="392.5" x2="43" y2="392.5" stroke="#909090"/>
<line x1="857" y1="392.5" x2="855" y2="392.5" stroke="#909090"/>
<line x1="39" y1="397.5" x2="43" y2="397.5" stroke="#909090"/>
<line x1="857" y1="397.5" x2="855" y2="397.5" stroke="#909090"/>
<line x1="39" y1="402.5" x2="43" y2="402.5" stroke="#909090"/>
<line x1="857" y1="402.5" x2="855" y2="402.5" stroke="#909090"/>
<line x1="39" y1="407.5" x2="43" y2="407.5" stroke="#909090"/>
<line x1="857" y1="407.5" x2="855" y2="407.5" stroke="#909090"/>
<line x1="39" y1="413.5" x2="52" y2="413.5" stroke="#909090"/>
<line x1="857" y1="413.5" x2="845" y2="413.5" stroke="#909090"/>
<line x1="39" y1="418.5" x2="43" y2="418.5" stroke="#909090"/>
<line x1="857" y1="418.5" x2="855" y2="418.5" stroke="#909090"/>
<line x1="39" y1="423.5" x2="43" y2="423.5" stroke="#909090"/>
<line x1="857" y1="423.5" x2="855" y2="423.5" stroke="#909090"/>
<line x1="39" y1="428.5" x2="43" y2="428.5" stroke="#909090"/>
<line x1="857" y1="428.5" x2="855" y2="428.5" stroke="#909090"/>
<line x1="39" y1="433.5" x2="43" y2="433.5" stroke="#909090"/>
<line x1="857" y1="433.5" x2="855" y2="433.5" stroke="#909090"/>
<line x1="39" y1="439.5" x2="46" y2="439.5" stroke="#909090"/>
<line x1="857" y1="439.5" x2="852" y2="439.5" stroke="#909090"/>
<line x1="39" y1="444.5" x2="43" y2="444.5" stroke="#909090"/>
<line x1="857" y1="444.5" x2="855" y2="444.5" stroke="#909090"/>
<line x1="39" y1="449.5" x2="43" y2="449.5" stroke="#909090"/>
<line x1="857" y1="449.5" x2="855" y2="449.5" stroke="#909090"/>
<line x1="39" y1="454.5" x2="43" y2="454.5" stroke="#909090"/>
<line x1="857" y1="454.5" x2="855" y2="454.5" stroke="#909090"/>
<line x1="39" y1="459.5" x2="43" y2="459.5" stroke="#909090"/>
<line x1="857" y1="459.5" x2="855" y2="459.5" stroke="#909090"/>
<line x1="39" y1="465.5" x2="52" y2="465.5" stroke="#909090"/>
<line x1="857" y1="465.5" x2="845" y2="465.5" stroke="#909090"/>
<line x1="39" y1="470.5" x2="43" y2="470.5" stroke="#909090"/>
<line x1="857" y1="470.5" x2="855" y2="470.5" stroke="#909090"/>
<line x1="39" y1="475.5" x2="43" y2="475.5" stroke="#909090"/>
<line x1="857" y1="475.5" x2="855" y2="475.5" stroke="#909090"/>
<line x1="39" y1="480.5" x2="43" y2="480.5" stroke="#909090"/>
<line x1="857" y1="480.5" x2="855" y2="480.5" stroke="#909090"/>
<line x1="39" y1="485.5" x2="43" y2="485.5" stroke="#909090"/>
<line x1="857" y1="485.5" x2="855" y2="485.5" stroke="#909090"/>
<line x1="39" y1="491.5" x2="46" y2="491.5" stroke="#909090"/>
<line x1="857" y1="491.5" x2="852" y2="491.5" stroke="#909090"/>
<line x1="39" y1="496.5" x2="43" y2="496.5" stroke="#909090"/>
<line x1="857" y1="496.5" x2="855" y2="496.5" stroke="#909090"/>
<line x1="39" y1="501.5" x2="43" y2="501.5" stroke="#909090"/>
<line x1="857" y1="501.5" x2="855" y2="501.5" stroke="#909090"/>
<line x1="39" y1="506.5" x2="43" y2="506.5" stroke="#909090"/>
<line x1="857" y1="506.5" x2="855" y2="506.5" stroke="#909090"/>
<line x1="39" y1="512.5" x2="43" y2="512.5" stroke="#909090"/>
<line x1="857" y1="512.5" x2="855" y2="512.5" stroke="#909090"/>
<line x1="39" y1="517.5" x2="52" y2="517.5" stroke="#909090"/>
<line x1="857" y1="517.5" x2="845" y2="517.5" stroke="#909090"/>
<line x1="39" y1="522.5" x2="43" y2="522.5" stroke="#909090"/>
<line x1="857" y1="522.5" x2="855" y2="522.5" stroke="#909090"/>
<line x1="39" y1="527.5" x2="43" y2="527.5" stroke="#909090"/>
<line x1="857" y1="527.5" x2="855" y2="527.5" stroke="#909090"/>
<line x1="39" y1="532.5" x2="43" y2="532.5" stroke="#909090"/>
<line x1="857" y1="532.5" x2="855" y2="532.5" stroke="#909090"/>
<line x1="39" y1="538.5" x2="43" y2="538.5" stroke="#909090"/>
<line x1="857" y1="538.5" x2="855" y2="538.5" stroke="#909090"/>
<line x1="39" y1="543.5" x2="46" y2="543.5" stroke="#909090"/>
<line x1="857" y1="543.5" x2="852" y2="543.5" stroke="#909090"/>
<line x1="39" y1="548.5" x2="43" y2="548.5" stroke="#909090"/>
<line x1="857" y1="548.5" x2="855" y2="548.5" stroke="#909090"/>
<line x1="39" y1="553.5" x2="43" y2="553.5" stroke="#909090"/>
<line x1="857" y1="553.5" x2="855" y2="553.5" stroke="#909090"/>
<line x1="39" y1="558.5" x2="43" y2="558.5" stroke="#909090"/>
<line x1="857" y1="558.5" x2="855" y2="558.5" stroke="#909090"/>
<line x1="39" y1="564.5" x2="43" y2="564.5" stroke="#909090"/>
<line x1="857" y1="564.5" x2="855" y2="564.5" stroke="#909090"/>
<line x1="39" y1="569.5" x2="52" y2="569.5" stroke="#909090"/>
<line x1="857" y1="569.5" x2="845" y2="569.5" stroke="#909090"/>
<line x1="39" y1="574.5" x2="43" y2="574.5" stroke="#909090"/>
<line x1="857" y1="574.5" x2="855" y2="574.5" stroke="#909090"/>
<line x1="39" y1="579.5" x2="43" y2="579.5" stroke="#909090"/>
<line x1="857" y1="579.5" x2="855" y2="579.5" stroke="#909090"/>
<line x1="39" y1="585.5" x2="43" y2="585.5" stroke="#909090"/>
<line x1="857" y1="585.5" x2="855" y2="585.5" stroke="#909090"/>
<line x1="39" y1="590.5" x2="43" y2="590.5" stroke="#909090"/>
<line x1="857" y1="590.5" x2="855" y2="590.5" stroke="#909090"/>
<line x1="39" y1="595.5" x2="46" y2="595.5" stroke="#909090"/>
<line x1="857" y1="595.5" x2="852" y2="595.5" stroke="#909090"/>
<line x1="39" y1="600.5" x2="43" y2="600.5" stroke="#909090"/>
<line x1="857" y1="600.5" x2="855" y2="600.5" stroke="#909090"/>
<line x1="39" y1="605.5" x2="43" y2="605.5" stroke="#909090"/>
<line x1="857" y1="605.5" x2="855" y2="605.5" stroke="#909090"/>
<line x1="39" y1="611.5" x2="43" y2="611.5" stroke="#909090"/>
<line x1="857" y1="611.5" x2="855" y2="611.5" stroke="#909090"/>
<line x1="39" y1="616.5" x2="43" y2="616.5" stroke="#909090"/>
<line x1="857" y1="616.5" x2="855" y2="616.5" stroke="#909090"/>
<line x1="39" y1="621.5" x2="52" y2="621.5" stroke="#909090"/>
<line x1="857" y1="621.5" x2="845" y2="621.5" stroke="#909090"/>
<line x1="39" y1="626.5" x2="43" y2="626.5" stroke="#909090"/>
<line x1="857" y1="626.5" x2="855" y2="626.5" stroke="#909090"/>
<line x1="39" y1="631.5" x2="43" y2="631.5" stroke="#909090"/>
<line x1="857" y1="631.5" x2="855" y2="631.5" stroke="#909090"/>
<line x1="39" y1="637.5" x2="43" y2="637.5" stroke="#909090"/>
<line x1="857" y1="637.5" x2="855" y2="637.5" stroke="#909090"/>
<line x1="39" y1="642.5" x2="43" y2="642.5" stroke="#909090"/>
<line x1="857" y1="642.5" x2="855" y2="642.5" stroke="#909090"/>
<line x1="39" y1="647.5" x2="46" y2="647.5" stroke="#909090"/>
<line x1="857" y1="647.5" x2="852" y2="647.5" stroke="#909090"/>
<line x1="39" y1="652.5" x2="43" y2="652.5" stroke="#909090"/>
<line x1="857" y1="652.5" x2="855" y2="652.5" stroke="#909090"/>
<line x1="39" y1="657.5" x2="43" y2="657.5" stroke="#909090"/>
<line x1="857" y1="657.5" x2="855" y2="657.5" stroke="#909090"/>
<line x1="39" y1="663.5" x2="43" y2="663.5" stroke="#909090"/>
<line x1="857" y1="663.5" x2="855" y2="663.5" stroke="#909090"/>
<line x1="39" y1="668.5" x2="43" y2="668.5" stroke="#909090"/>
<line x1="857" y1="668.5" x2="855" y2="668.5" stroke="#909090"/>
<line x1="52" y1="413.5" x2="845" y2="413.5" stroke="#c8c8c8" stroke-dasharray="3.5 2"/>
<line x1="448.5" y1="165" x2="448.5" y2="658" stroke="#c8c8c8" stroke-dasharray="3.5 2"/></g><path d="M39.50,432.55 L39.90,433.75 L41.90,465.00 L43.15,492.50 L44.40,517.50 L45.65,530.00 L47.40,537.50 L49.40,543.75 L52.40,547.50 L57.40,548.60 L61.15,548.00 L61.90,540.00 L63.15,517.50 L64.15,462.50 L65.65,437.50 L67.40,412.50 L69.15,403.75 L71.90,397.50 L76.15,394.80 L82.40,394.00 L85.40,394.00 L88.40,394.00 L91.40,394.00 L94.40,394.50 L97.40,394.00 L100.40,394.00 L103.40,393.50 L106.40,394.00 L109.40,394.00 L112.40,394.00 L115.40,394.00 L118.40,394.00 L121.40,394.00 L124.40,394.00 L127.40,394.00 L130.40,394.00 L133.40,394.00 L136.40,394.00 L139.40,394.00 L142.40,394.00 L145.40,394.00 L148.40,394.00 L151.40,394.00 L154.40,394.00 L157.40,393.50 L160.40,394.00 L163.40,394.00 L166.40,394.00 L169.40,394.50 L172.40,394.50 L175.40,394.00 L178.40,394.00 L181.40,394.00 L184.40,394.00 L187.40,394.00 L190.40,394.00 L193.40,394.00 L196.40,394.00 L199.40,394.00 L202.40,393.50 L205.40,394.00 L208.40,394.00 L211.40,394.00 L214.40,394.00 L217.40,394.00 L221.45,394.20 L223.20,397.00 L225.20,405.00 L226.70,412.50 L228.95,430.00 L230.20,433.75 L232.20,465.00 L233.45,492.50 L234.70,517.50 L235.95,530.00 L237.70,537.50 L239.70,543.75 L242.70,547.50 L247.70,548.60 L251.45,548.00 L252.20,540.00 L253.45,517.50 L254.45,462.50 L255.95,437.50 L257.70,412.50 L259.45,403.75 L262.20,397.50 L266.45,394.80 L272.70,394.00 L275.70,394.00 L278.70,394.00 L281.70,394.00 L284.70,394.00 L287.70,393.50 L290.70,394.50 L293.70,394.00 L296.70,394.00 L299.70,394.00 L302.70,394.00 L305.70,394.50 L308.70,394.00 L311.70,394.00 L314.70,394.00 L317.70,394.00 L320.70,394.50 L323.70,394.00 L326.70,394.00 L329.70,394.00 L332.70,394.00 L335.70,394.00 L338.70,394.00 L341.70,394.50 L344.70,394.00 L347.70,394.00 L350.70,393.50 L353.70,394.00 L356.70,394.00 L359.70,394.00 L362.70,394.00 L365.70,394.00 L368.70,394.00 L371.70,394.00 L374.70,393.50 L377.70,394.00 L380.70,394.50 L383.70,393.50 L386.70,394.00 L389.70,394.00 L392.70,394.00 L395.70,394.00 L398.70,394.00 L401.70,394.00 L404.70,394.00 L407.70,394.50 L411.75,394.20 L413.50,397.00 L415.50,405.00 L417.00,412.50 L419.25,430.00 L420.50,433.75 L422.50,465.00 L423.75,492.50 L425.00,517.50 L426.25,530.00 L428.00,537.50 L430.00,543.75 L433.00,547.50 L438.00,548.60 L441.75,548.00 L442.50,540.00 L443.75,517.50 L444.75,462.50 L446.25,437.50 L448.00,412.50 L449.75,403.75 L452.50,397.50 L456.75,394.80 L463.00,394.00 L466.00,394.00 L469.00,394.00 L472.00,394.00 L475.00,394.00 L478.00,394.00 L481.00,394.00 L484.00,394.00 L487.00,394.00 L490.00,393.50 L493.00,394.00 L496.00,394.00 L499.00,394.00 L502.00,394.00 L505.00,394.00 L508.00,394.50 L511.00,394.00 L514.00,393.50 L517.00,394.00 L520.00,394.00 L523.00,393.50 L526.00,393.50 L529.00,394.00 L532.00,394.00 L535.00,394.50 L538.00,394.00 L541.00,394.00 L544.00,394.00 L547.00,394.00 L550.00,393.50 L553.00,394.00 L556.00,394.00 L559.00,393.50 L562.00,394.00 L565.00,394.00 L568.00,394.00 L571.00,394.50 L574.00,394.50 L577.00,394.00 L580.00,394.00 L583.00,394.50 L586.00,394.50 L589.00,394.00 L592.00,394.50 L595.00,394.00 L598.00,394.50 L602.05,394.20 L603.80,397.00 L605.80,405.00 L607.30,412.50 L609.55,430.00 L610.80,433.75 L612.80,465.00 L614.05,492.50 L615.30,517.50 L616.55,530.00 L618.30,537.50 L620.30,543.75 L623.30,547.50 L628.30,548.60 L632.05,548.00 L632.80,540.00 L634.05,517.50 L635.05,462.50 L636.55,437.50 L638.30,412.50 L640.05,403.75 L642.80,397.50 L647.05,394.80 L653.30,394.00 L656.30,393.50 L659.30,394.00 L662.30,394.00 L665.30,394.50 L668.30,394.00 L671.30,394.50 L674.30,394.00 L677.30,394.00 L680.30,394.00 L683.30,394.00 L686.30,394.00 L689.30,394.00 L692.30,394.00 L695.30,394.00 L698.30,394.00 L701.30,394.00 L704.30,393.50 L707.30,394.00 L710.30,394.00 L713.30,394.50 L716.30,394.00 L719.30,394.00 L722.30,394.00 L725.30,393.50 L728.30,394.00 L731.30,394.00 L734.30,394.00 L737.30,394.00 L740.30,394.00 L743.30,394.00 L746.30,394.00 L749.30,394.00 L752.30,393.50 L755.30,394.00 L758.30,393.50 L761.30,394.00 L764.30,394.00 L767.30,394.50 L770.30,394.00 L773.30,394.00 L776.30,394.50 L779.30,394.00 L782.30,394.00 L785.30,394.00 L788.30,394.00 L792.35,394.20 L794.10,397.00 L796.10,405.00 L797.60,412.50 L799.85,430.00 L801.10,433.75 L803.10,465.00 L804.35,492.50 L805.60,517.50 L806.85,530.00 L808.60,537.50 L810.60,543.75 L813.60,547.50 L818.60,548.60 L822.35,548.00 L823.10,540.00 L824.35,517.50 L825.35,462.50 L826.85,437.50 L828.60,412.50 L830.35,403.75 L833.10,397.50 L837.35,394.80 L843.60,394.00 L846.60,394.00 L849.60,394.00 L852.60,394.00 L855.60,394.50 L858.60,394.00 L861.60,394.00 L864.60,394.00 L867.60,393.50 L870.60,394.00 L874.50,394.04 L874.5,440" fill="none" stroke="#ffff00" stroke-width="1.4"/><line x1="874.5" y1="440" x2="874.5" y2="550" stroke="#c8c800" stroke-dasharray="3 2" shape-rendering="crispEdges"/><polygon points="39,407 39,418.5 50.5,412.8" fill="#ffff00"/>
<polygon points="856,404 856,415.5 845,409.8" fill="#ffff00"/>
<polygon points="442,152.5 455,152.5 448.5,164" fill="#ffffff"/></svg>
<style>.yl{position:absolute;left:4px;height:14px;line-height:14px;font-size:11px;color:#f0f000}.xl{position:absolute;top:679px;width:80px;text-align:center;height:14px;line-height:14px;font-size:11px;color:#fff}</style>
<div class="t" style="left:4.00px;top:153px;font-size:11px;color:#f0f000;">10</div>
<div class="t" style="left:4.00px;top:204px;font-size:11px;color:#f0f000;">8</div>
<div class="t" style="left:4.00px;top:254px;font-size:11px;color:#f0f000;">6</div>
<div class="t" style="left:4.00px;top:305px;font-size:11px;color:#f0f000;">4</div>
<div class="t" style="left:4.00px;top:356px;font-size:11px;color:#f0f000;">2</div>
<div class="t" style="left:4.00px;top:407px;font-size:11px;color:#f0f000;">0</div>
<div class="t" style="left:4.00px;top:457px;font-size:11px;color:#f0f000;">-2</div>
<div class="t" style="left:4.00px;top:508px;font-size:11px;color:#f0f000;">-4</div>
<div class="t" style="left:4.00px;top:558px;font-size:11px;color:#f0f000;">-6</div>
<div class="t" style="left:4.00px;top:610px;font-size:11px;color:#f0f000;">-8</div>
<div class="t" style="left:4.00px;top:661px;font-size:11px;color:#f0f000;">-10</div>
<div class="t" style="left:30.30px;top:677px;font-size:11px;color:#ffffff;letter-spacing:-0.890px;word-spacing:1.5px;">-25 us</div>
<div class="t" style="left:111.10px;top:677px;font-size:11px;color:#ffffff;letter-spacing:-0.890px;word-spacing:1.5px;">-20 us</div>
<div class="t" style="left:191.90px;top:677px;font-size:11px;color:#ffffff;letter-spacing:-0.890px;word-spacing:1.5px;">-15 us</div>
<div class="t" style="left:272.00px;top:677px;font-size:11px;color:#ffffff;letter-spacing:-0.830px;word-spacing:1.5px;">-10 us</div>
<div class="t" style="left:353.40px;top:677px;font-size:11px;color:#ffffff;letter-spacing:-0.862px;word-spacing:1.5px;">-5 us</div>
<div class="t" style="left:433.00px;top:677px;font-size:11px;color:#ffffff;letter-spacing:-1.000px;word-spacing:1.5px;">0 us</div>
<div class="t" style="left:514.60px;top:677px;font-size:11px;color:#ffffff;letter-spacing:-1.300px;word-spacing:1.5px;">5 us</div>
<div class="t" style="left:597.00px;top:677px;font-size:11px;color:#ffffff;letter-spacing:-1.250px;word-spacing:1.5px;">10 us</div>
<div class="t" style="left:677.00px;top:677px;font-size:11px;color:#ffffff;letter-spacing:-1.000px;word-spacing:1.5px;">15 us</div>
<div class="t" style="left:757.40px;top:677px;font-size:11px;color:#ffffff;letter-spacing:-1.050px;word-spacing:1.5px;">20 us</div>
<div class="t" style="left:838.00px;top:677px;font-size:11px;color:#ffffff;letter-spacing:-0.975px;word-spacing:1.5px;">25 us</div>
<div class="t" style="left:17.00px;top:137px;font-size:11px;color:#e8e800;">V</div>
<div style="position:absolute;left:39px;top:134px;width:75px;height:19px;border:2px solid #ff0000;background:#f0f0f0"></div>
<div class="t" style="left:65.00px;top:137px;font-size:11px;font-weight:bold;color:#000;letter-spacing:0.117px;">Stop</div>
<div style="position:absolute;left:114px;top:134px;width:22px;height:19px;border:1px solid #d0d0d0;border-right-color:#a0a0a0;border-bottom-color:#a0a0a0;background:#000"></div>
<div class="t" style="left:118.00px;top:137px;font-size:11px;font-weight:bold;color:#f0f000;letter-spacing:-1.250px;">C1</div>
<div style="position:absolute;left:136px;top:134px;width:22px;height:19px;border:1px solid #d0d0d0;border-right-color:#a0a0a0;border-bottom-color:#a0a0a0;background:#000"></div>
<div class="t" style="left:140.00px;top:137px;font-size:11px;font-weight:bold;color:#00e8f0;letter-spacing:-1.250px;">C2</div>
<div class="t" style="left:160.00px;top:137px;font-size:11px;color:#ffffff;letter-spacing:-0.625px;word-spacing:1.5px;">8192 samples at 100 MHz | 2018-07-14 12:55:45.762</div>
<svg style="left:762px;top:135px" width="18" height="17"><circle cx="7" cy="7" r="5.6" fill="#2050a8" stroke="#c8d0e0" stroke-width="1.4"/><rect x="6.2" y="4" width="1.6" height="5" fill="#fff"/><path d="M11,11 L15.5,15.5" stroke="#9098a0" stroke-width="2"/></svg>
<svg style="left:783px;top:136px" width="14" height="14"><path d="M2,1 L8,7 M2,1 L2,5 M2,1 L6,1" stroke="#1a7ae8" stroke-width="1.5" fill="none"/><rect x="0.5" y="8.5" width="12" height="3.5" fill="#7a7a7a"/></svg>
<svg style="left:802px;top:136px" width="14" height="14"><path d="M1.5,1 V6 M1.5,3.5 H9" stroke="#1a7ae8" stroke-width="1.5" fill="none"/><rect x="0.5" y="8.5" width="12" height="3.5" fill="#7a7a7a"/></svg>
<svg style="left:821px;top:136px" width="14" height="14"><path d="M1.5,0.5 V6 M1.5,1.5 H12 M1.5,4.5 H8" stroke="#1a7ae8" stroke-width="1.5" fill="none"/><rect x="0.5" y="8.5" width="12" height="3.5" fill="#7a7a7a"/></svg>
<div style="position:absolute;left:837px;top:134px;width:20px;height:18px;border-radius:3px;background:linear-gradient(#ffffff,#e4e4e4);border:1px solid #d0d0d0"></div>
<svg style="left:840px;top:136px" width="14" height="14" viewBox="0 0 14 14"><defs><linearGradient id="gr" x1="0" y1="0" x2="1" y2="1"><stop offset="0" stop-color="#f4f6f8"/><stop offset="0.5" stop-color="#d0d6dc"/><stop offset="1" stop-color="#8a96a2"/></linearGradient></defs><g transform="rotate(18 7 7)"><path d="M6,0.5 H8 L8.4,2.3 L9.9,2.9 L11.4,1.9 L12.8,3.3 L11.8,4.8 L12.4,6.3 L14,6.6 V8.4 L12.4,8.8 L11.8,10.2 L12.8,11.7 L11.4,13.1 L9.9,12.1 L8.4,12.7 L8,14 H6 L5.6,12.7 L4.1,12.1 L2.6,13.1 L1.2,11.7 L2.2,10.2 L1.6,8.8 L0,8.4 V6.6 L1.6,6.3 L2.2,4.8 L1.2,3.3 L2.6,1.9 L4.1,2.9 L5.6,2.3 Z" fill="url(#gr)" stroke="#5e6c78" stroke-width="0.9"/></g><circle cx="6.8" cy="7" r="2.5" fill="#e8ecf0" stroke="#2e3c48" stroke-width="1.3"/></svg>
<div style="position:absolute;left:859px;top:135px;width:18px;height:17px;border-radius:3px;background:linear-gradient(#ffffff,#e0e0e0);border:1px solid #d8d8d8"></div>
<div class="t" style="left:865.00px;top:137px;font-size:11px;font-weight:bold;color:#101010;">Y</div>
<div style="position:absolute;left:3px;top:675px;width:26px;height:17px;border:1px solid #a0a0a0;border-radius:3px;background:linear-gradient(#fafafa,#e4e4e4);box-shadow:inset 0 0 0 1px #fff"></div>
<div style="position:absolute;left:17px;top:677px;width:1px;height:13px;background:#606060"></div>
<div class="t" style="left:6.00px;top:677px;font-size:11px;font-weight:bold;color:#202020;">X</div>
<div class="arr" style="left:20px;top:683px;border-left-width:3.5px;border-right-width:3.5px;border-top-width:4px"></div>
<div style="position:absolute;left:876px;top:134px;width:4px;height:559px;background:linear-gradient(90deg,#c8c8c8,#e0e0e0,#c0c0c0)"></div>
<div style="position:absolute;left:880px;top:134px;width:223px;height:558px;background:#f0f0f0"></div>
<div style="position:absolute;left:880px;top:134px;width:223px;height:19px;background:#d8d8d8;border-top:1px solid #fafafa;border-left:1px solid #fafafa;border-bottom:1px solid #c4c4c4;border-right:1px solid #b0b0b0"></div>
<div style="position:absolute;left:876px;top:133px;width:401px;height:1px;background:#a8a8a8"></div>
<div class="t" style="left:884.00px;top:138px;font-size:11px;letter-spacing:-0.632px;">Measurements</div>
<svg style="left:1075px;top:139px" width="10" height="10"><rect x="3.5" y="0.5" width="6" height="5" fill="none" stroke="#000" stroke-width="1"/><rect x="3.5" y="0.5" width="6" height="1.5" fill="#000"/><rect x="0.5" y="4.5" width="5.5" height="5" fill="#dcdcdc" stroke="#000" stroke-width="1"/></svg>
<svg style="left:1089px;top:139px" width="10" height="10"><path d="M1,1 L9,9 M9,1 L1,9" stroke="#000" stroke-width="1.4"/></svg>
<svg style="left:887px;top:159px" width="15" height="15"><defs><linearGradient id="pg" x1="0" y1="0" x2="0" y2="1"><stop offset="0" stop-color="#b8f090"/><stop offset="0.45" stop-color="#62cc38"/><stop offset="1" stop-color="#2e9a1a"/></linearGradient></defs><path d="M5.5,1 H9.5 V5.5 H14 V9.5 H9.5 V14 H5.5 V9.5 H1 V5.5 H5.5 Z" fill="url(#pg)" stroke="#4aa82a" stroke-width="0.7" stroke-linejoin="round"/></svg>
<div class="t" style="left:905.00px;top:161px;font-size:11px;letter-spacing:-0.375px;">Add</div>
<svg style="left:923px;top:171px" width="6" height="4"><path d="M0,0 H6 L3,3 Z" fill="#000"/></svg>
<svg style="left:939px;top:163px" width="16" height="7"><rect x="0.75" y="0.75" width="13.5" height="4.8" rx="1.5" fill="#cc1818" stroke="#901010" stroke-width="0.7"/><rect x="2" y="1.2" width="11" height="1.5" fill="#ff9090" opacity=".75"/></svg>
<svg style="left:956px;top:171px" width="6" height="4"><path d="M0,0 H6 L3,3 Z" fill="#000"/></svg>
<svg style="left:971px;top:159px" width="13" height="15"><rect x="0.5" y="0.5" width="11" height="14" fill="#f4f4f4" stroke="#a0a0a0"/><path d="M2.5,2.5 L10,12" stroke="#d8a020" stroke-width="1.4"/></svg>
<div class="t" style="left:988.00px;top:161px;font-size:11px;letter-spacing:-0.383px;">Edit</div>
<svg style="left:1017px;top:159px" width="16" height="15"><rect x="0.5" y="0.5" width="14" height="13" fill="#fafafa" stroke="#d0d0d0"/><path d="M3,4 H14 M3,7.5 H14 M3,11 H14" stroke="#c8c8c8"/><rect x="2" y="5.5" width="2" height="2" fill="#2a7ae0"/><rect x="2" y="9.5" width="2" height="2" fill="#2a7ae0"/></svg>
<div class="t" style="left:1035.00px;top:161px;font-size:11px;letter-spacing:-0.583px;">Show</div>
<svg style="left:1059px;top:171px" width="6" height="4"><path d="M0,0 H6 L3,3 Z" fill="#000"/></svg>
<div style="position:absolute;left:880px;top:179px;width:223px;height:514px;background:#fff;border:1px solid #828790"></div>
<div style="position:absolute;left:881px;top:180px;width:206px;height:20px;background:linear-gradient(#ffffff,#f4f5f7 50%,#eceef1 50%,#e8eaee)"></div>
<div style="position:absolute;left:881px;top:199px;width:206px;height:1px;background:#dcdde0"></div>
<div style="position:absolute;left:881px;top:180px;width:6px;height:512px;background:#f4f4f4"></div>
<div style="position:absolute;left:887px;top:180px;width:1px;height:42px;background:#e2e3e6"></div>
<div style="position:absolute;left:916px;top:180px;width:1px;height:42px;background:#e2e3e6"></div>
<div style="position:absolute;left:975px;top:180px;width:1px;height:42px;background:#e2e3e6"></div>
<div style="position:absolute;left:887px;top:221px;width:199px;height:1px;background:#e8e8e8"></div>
<div style="position:absolute;left:1085px;top:180px;width:1px;height:42px;background:#e2e3e6"></div>
<div style="position:absolute;left:1087px;top:180px;width:15px;height:512px;background:#f0f0f0;border-left:1px solid #e8e8e8"></div>
<svg style="left:1090px;top:185px" width="9" height="5"><path d="M0.5,4.5 L4.5,0.5 L8.5,4.5 Z" fill="#8a8a8a"/></svg>
<svg style="left:1090px;top:681px" width="9" height="5"><path d="M0.5,0.5 L4.5,4.5 L8.5,0.5 Z" fill="#8a8a8a"/></svg>
<div class="t" style="left:932.00px;top:184px;font-size:11px;letter-spacing:0.483px;">Name</div>
<div class="t" style="left:1017.00px;top:184px;font-size:11px;letter-spacing:0.125px;">Value</div>
<div class="t" style="left:892.00px;top:206px;font-size:11px;letter-spacing:-1.500px;">C1</div>
<div class="t" style="left:921.00px;top:206px;font-size:11px;letter-spacing:-0.144px;">Frequency</div>
<div class="t" style="left:977.00px;top:206px;font-size:11px;letter-spacing:-0.350px;word-spacing:1.5px;">85.981170545 kHz</div>
<div style="position:absolute;left:1103px;top:134px;width:174px;height:558px;background:#f0f0f0;border-left:1px solid #f0f0f0"></div>
<div style="position:absolute;left:1104px;top:134px;width:1px;height:558px;background:#fcfcfc"></div>
<svg style="left:1107px;top:140px" width="11" height="8"><defs><linearGradient id="ag" x1="0" y1="0" x2="1" y2="0"><stop offset="0" stop-color="#9ad890"/><stop offset="1" stop-color="#48a848"/></linearGradient></defs><path d="M0.5,2 H6 V0.3 L10,3.5 L6,6.7 V5 H0.5 Z" fill="url(#ag)"/></svg>
<div style="position:absolute;left:1106px;top:152px;width:151px;height:82px;background:#fbfbfb"></div>
<div style="position:absolute;left:1108px;top:154px;width:147px;height:78px;background:#ebebeb"></div>
<div style="position:absolute;left:1109px;top:157px;width:13px;height:13px;border:1px solid #a4a4a4;border-radius:1px;background:linear-gradient(135deg,#dcdcdc,#f8f8f8)"></div><div style="position:absolute;left:1111px;top:159px;width:9px;height:9px;border:1px solid #c0c4cc;background:linear-gradient(135deg,#e8eaec,#ffffff)"></div><svg style="left:1111px;top:159px" width="10" height="10"><path d="M1.8,5.5 L4,8.5 L8.2,1.2" fill="none" stroke="#3050a8" stroke-width="1.6"/></svg>
<div class="t" style="left:1126.00px;top:157px;font-size:11px;letter-spacing:-1.083px;">Time</div>
<div style="position:absolute;left:1231px;top:156px;width:21px;height:15px;border:1px solid #707070;border-radius:3px;background:linear-gradient(#f4f4f4,#dcdcdc)"></div><svg style="left:1235px;top:157px" width="13" height="13" viewBox="0 0 14 14"><defs><linearGradient id="gr" x1="0" y1="0" x2="1" y2="1"><stop offset="0" stop-color="#f4f6f8"/><stop offset="0.5" stop-color="#d0d6dc"/><stop offset="1" stop-color="#8a96a2"/></linearGradient></defs><g transform="rotate(18 7 7)"><path d="M6,0.5 H8 L8.4,2.3 L9.9,2.9 L11.4,1.9 L12.8,3.3 L11.8,4.8 L12.4,6.3 L14,6.6 V8.4 L12.4,8.8 L11.8,10.2 L12.8,11.7 L11.4,13.1 L9.9,12.1 L8.4,12.7 L8,14 H6 L5.6,12.7 L4.1,12.1 L2.6,13.1 L1.2,11.7 L2.2,10.2 L1.6,8.8 L0,8.4 V6.6 L1.6,6.3 L2.2,4.8 L1.2,3.3 L2.6,1.9 L4.1,2.9 L5.6,2.3 Z" fill="url(#gr)" stroke="#5e6c78" stroke-width="0.9"/></g><circle cx="6.8" cy="7" r="2.5" fill="#e8ecf0" stroke="#2e3c48" stroke-width="1.3"/></svg>
<div class="t" style="left:1112.00px;top:174px;font-size:11px;letter-spacing:-0.425px;">Position:</div>
<div class="edit" style="left:1169px;top:172px;width:82px;height:19px;border-color:#a4a6ac #dde2ea #dde2ea #b8bac0"></div><div class="arr" style="left:1239px;top:180px"></div><div class="t" style="left:1173.00px;top:175px;font-size:11px;letter-spacing:-1.175px;word-spacing:1.5px;">0 s</div>
<div class="t" style="left:1112.00px;top:194px;font-size:11px;letter-spacing:-0.587px;">Base:</div>
<div class="edit" style="left:1169px;top:192px;width:82px;height:19px;border-color:#a4a6ac #dde2ea #dde2ea #b8bac0"></div><div class="arr" style="left:1239px;top:200px"></div><div class="t" style="left:1173.00px;top:195px;font-size:11px;letter-spacing:-0.514px;word-spacing:1.5px;">5 us/div</div>
<div class="btn" style="left:1110px;top:213px;width:142px;height:19px;border-color:#505050"></div>
<svg style="left:1177px;top:216px" width="9" height="14"><path d="M3,0.5 H6 V9 H8.5 L4.5,13.5 L0.5,9 H3 Z" fill="#68c050" stroke="#3a9a28" stroke-width="0.6"/></svg>
<div class="btn" style="left:1107px;top:239px;width:148px;height:20px"></div>
<svg style="left:1143px;top:242px" width="15" height="15"><defs><linearGradient id="pg" x1="0" y1="0" x2="0" y2="1"><stop offset="0" stop-color="#b8f090"/><stop offset="0.45" stop-color="#62cc38"/><stop offset="1" stop-color="#2e9a1a"/></linearGradient></defs><path d="M5.5,1 H9.5 V5.5 H14 V9.5 H9.5 V14 H5.5 V9.5 H1 V5.5 H5.5 Z" fill="url(#pg)" stroke="#4aa82a" stroke-width="0.7" stroke-linejoin="round"/></svg>
<div class="t" style="left:1161.00px;top:243px;font-size:11px;letter-spacing:-0.730px;word-spacing:1.5px;">Add Channel</div>
<div class="arr" style="left:1241px;top:247px"></div>
<div style="position:absolute;left:1106px;top:261px;width:150px;height:64px;border:4px solid #ffff00;background:#ebebeb"></div>
<div style="position:absolute;left:1110px;top:266px;width:13px;height:13px;border:1px solid #a4a4a4;border-radius:1px;background:linear-gradient(135deg,#dcdcdc,#f8f8f8)"></div><div style="position:absolute;left:1112px;top:268px;width:9px;height:9px;border:1px solid #c0c4cc;background:linear-gradient(135deg,#e8eaec,#ffffff)"></div><svg style="left:1112px;top:268px" width="10" height="10"><path d="M1.8,5.5 L4,8.5 L8.2,1.2" fill="none" stroke="#3050a8" stroke-width="1.6"/></svg>
<div class="t" style="left:1126.00px;top:266px;font-size:11px;letter-spacing:-0.731px;word-spacing:1.5px;">Channel 1</div>
<div style="position:absolute;left:1231px;top:266px;width:21px;height:15px;border:1px solid #707070;border-radius:3px;background:linear-gradient(#f4f4f4,#dcdcdc)"></div><svg style="left:1235px;top:267px" width="13" height="13" viewBox="0 0 14 14"><defs><linearGradient id="gr" x1="0" y1="0" x2="1" y2="1"><stop offset="0" stop-color="#f4f6f8"/><stop offset="0.5" stop-color="#d0d6dc"/><stop offset="1" stop-color="#8a96a2"/></linearGradient></defs><g transform="rotate(18 7 7)"><path d="M6,0.5 H8 L8.4,2.3 L9.9,2.9 L11.4,1.9 L12.8,3.3 L11.8,4.8 L12.4,6.3 L14,6.6 V8.4 L12.4,8.8 L11.8,10.2 L12.8,11.7 L11.4,13.1 L9.9,12.1 L8.4,12.7 L8,14 H6 L5.6,12.7 L4.1,12.1 L2.6,13.1 L1.2,11.7 L2.2,10.2 L1.6,8.8 L0,8.4 V6.6 L1.6,6.3 L2.2,4.8 L1.2,3.3 L2.6,1.9 L4.1,2.9 L5.6,2.3 Z" fill="url(#gr)" stroke="#5e6c78" stroke-width="0.9"/></g><circle cx="6.8" cy="7" r="2.5" fill="#e8ecf0" stroke="#2e3c48" stroke-width="1.3"/></svg>
<div class="t" style="left:1112.00px;top:284px;font-size:11px;letter-spacing:0.100px;">Offset:</div>
<div class="edit" style="left:1169px;top:282px;width:82px;height:19px;border-color:#a4a6ac #dde2ea #dde2ea #b8bac0"></div><div class="arr" style="left:1239px;top:290px"></div><div class="t" style="left:1173.00px;top:285px;font-size:11px;letter-spacing:0.150px;">0 V</div>
<div class="t" style="left:1112.00px;top:303px;font-size:11px;letter-spacing:-0.530px;">Range:</div>
<div class="edit" style="left:1169px;top:302px;width:82px;height:18px;border-color:#a4a6ac #dde2ea #dde2ea #b8bac0"></div><div class="arr" style="left:1239px;top:310px"></div><div class="t" style="left:1173.00px;top:305px;font-size:11px;letter-spacing:-0.725px;word-spacing:1.5px;">2 V/div</div>
<div style="position:absolute;left:1106px;top:325px;width:150px;height:24px;border:4px solid #00f0ff;background:#ebebeb"></div>
<div style="position:absolute;left:1110px;top:331px;width:13px;height:13px;border:1px solid #a4a4a4;border-radius:1px;background:linear-gradient(135deg,#dcdcdc,#f8f8f8)"></div><div style="position:absolute;left:1112px;top:333px;width:9px;height:9px;border:1px solid #c0c4cc;background:linear-gradient(135deg,#e8eaec,#ffffff)"></div>
<div class="t" style="left:1126.00px;top:332px;font-size:11px;letter-spacing:-0.731px;word-spacing:1.5px;">Channel 2</div>
<div style="position:absolute;left:1231px;top:331px;width:21px;height:15px;border:1px solid #707070;border-radius:3px;background:linear-gradient(#f4f4f4,#dcdcdc)"></div><svg style="left:1235px;top:332px" width="13" height="13" viewBox="0 0 14 14"><defs><linearGradient id="gr" x1="0" y1="0" x2="1" y2="1"><stop offset="0" stop-color="#f4f6f8"/><stop offset="0.5" stop-color="#d0d6dc"/><stop offset="1" stop-color="#8a96a2"/></linearGradient></defs><g transform="rotate(18 7 7)"><path d="M6,0.5 H8 L8.4,2.3 L9.9,2.9 L11.4,1.9 L12.8,3.3 L11.8,4.8 L12.4,6.3 L14,6.6 V8.4 L12.4,8.8 L11.8,10.2 L12.8,11.7 L11.4,13.1 L9.9,12.1 L8.4,12.7 L8,14 H6 L5.6,12.7 L4.1,12.1 L2.6,13.1 L1.2,11.7 L2.2,10.2 L1.6,8.8 L0,8.4 V6.6 L1.6,6.3 L2.2,4.8 L1.2,3.3 L2.6,1.9 L4.1,2.9 L5.6,2.3 Z" fill="url(#gr)" stroke="#5e6c78" stroke-width="0.9"/></g><circle cx="6.8" cy="7" r="2.5" fill="#e8ecf0" stroke="#2e3c48" stroke-width="1.3"/></svg>
<div style="position:absolute;left:1259px;top:152px;width:18px;height:540px;background:#f0f0f0;border-left:1px solid #e4e4e4"></div>
<svg style="left:1263px;top:157px" width="9" height="5"><path d="M0.5,4.5 L4.5,0.5 L8.5,4.5 Z" fill="#8a8a8a"/></svg>
<svg style="left:1263px;top:681px" width="9" height="5"><path d="M0.5,0.5 L4.5,4.5 L8.5,0.5 Z" fill="#8a8a8a"/></svg>
<div style="position:absolute;left:1103px;top:692px;width:173px;height:1px;background:#a0a0a8"></div>
<div style="position:absolute;left:0px;top:694px;width:1280px;height:25px;background:#f0f0f0"></div>
<div style="position:absolute;left:1px;top:693px;width:1276px;height:1px;background:#ffffff"></div>
<div style="position:absolute;left:0px;top:694px;width:1278px;height:2px;background:linear-gradient(#c4c4ca,#a8a8b0)"></div>
<div style="position:absolute;left:0px;top:696px;width:1278px;height:1px;background:#ffffff"></div>
<div style="position:absolute;left:0px;top:716px;width:1280px;height:1px;background:#ffffff"></div>
<div style="position:absolute;left:0px;top:717px;width:1280px;height:1px;background:#5a6a80"></div>
<div style="position:absolute;left:0px;top:718px;width:288px;height:1px;background:#d8e8f8"></div>
<div style="position:absolute;left:288px;top:718px;width:992px;height:1px;background:#ffffff"></div>
<div class="btn" style="left:3px;top:700px;width:77px;height:16px;border-color:#8a8a8a"></div>
<div class="t" style="left:7.00px;top:702px;font-size:11px;letter-spacing:-0.619px;word-spacing:1.5px;">Manual Trigger</div>
<div style="position:absolute;left:1006px;top:697px;width:1px;height:20px;background:#d8d8d8;border-right:1px solid #fff"></div>
<div style="position:absolute;left:1173px;top:697px;width:1px;height:20px;background:#d8d8d8;border-right:1px solid #fff"></div>
<div style="position:absolute;left:1254px;top:697px;width:1px;height:20px;background:#d8d8d8;border-right:1px solid #fff"></div>
<div class="btn" style="left:1013px;top:700px;width:157px;height:16px;border-color:#8a8a8a"></div>
<div class="t" style="left:1017.00px;top:702px;font-size:11px;letter-spacing:-0.561px;word-spacing:1.5px;">Discovery2NI SN:210321A29849</div>
<div class="btn" style="left:1178px;top:700px;width:73px;height:16px;border-color:#8a8a8a"></div>
<div class="t" style="left:1189.00px;top:702px;font-size:11px;letter-spacing:-0.544px;word-spacing:1.5px;">Status: OK</div>
<div style="position:absolute;left:1258px;top:700px;width:21px;height:15px;border:1px solid #707070;border-radius:3px;background:linear-gradient(#f4f4f4,#dcdcdc)"></div><svg style="left:1262px;top:701px" width="13" height="13" viewBox="0 0 14 14"><defs><linearGradient id="gr" x1="0" y1="0" x2="1" y2="1"><stop offset="0" stop-color="#f4f6f8"/><stop offset="0.5" stop-color="#d0d6dc"/><stop offset="1" stop-color="#8a96a2"/></linearGradient></defs><g transform="rotate(18 7 7)"><path d="M6,0.5 H8 L8.4,2.3 L9.9,2.9 L11.4,1.9 L12.8,3.3 L11.8,4.8 L12.4,6.3 L14,6.6 V8.4 L12.4,8.8 L11.8,10.2 L12.8,11.7 L11.4,13.1 L9.9,12.1 L8.4,12.7 L8,14 H6 L5.6,12.7 L4.1,12.1 L2.6,13.1 L1.2,11.7 L2.2,10.2 L1.6,8.8 L0,8.4 V6.6 L1.6,6.3 L2.2,4.8 L1.2,3.3 L2.6,1.9 L4.1,2.9 L5.6,2.3 Z" fill="url(#gr)" stroke="#5e6c78" stroke-width="0.9"/></g><circle cx="6.8" cy="7" r="2.5" fill="#e8ecf0" stroke="#2e3c48" stroke-width="1.3"/></svg>
</body></html>
